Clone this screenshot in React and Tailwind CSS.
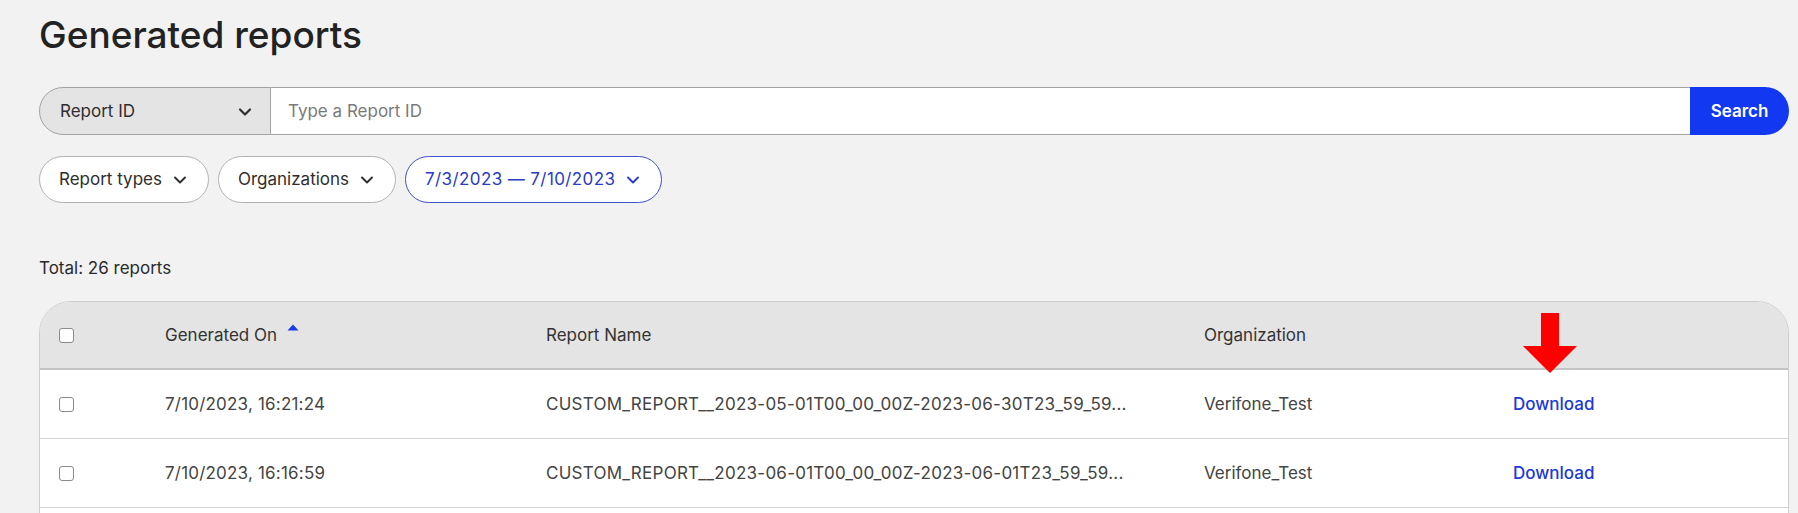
import React from 'react';
import { ChevronDown } from 'lucide-react';

const font = { fontFamily: 'Inter, "Noto Sans", Arial, sans-serif' };

const rows = [
  {
    date: '7/10/2023, 16:21:24',
    name: 'CUSTOM_REPORT__2023-05-01T00_00_00Z-2023-06-30T23_59_59...',
    org: 'Verifone_Test',
  },
  {
    date: '7/10/2023, 16:16:59',
    name: 'CUSTOM_REPORT__2023-06-01T00_00_00Z-2023-06-01T23_59_59...',
    org: 'Verifone_Test',
  },
];

const Checkbox = () => (
  <span className="block w-[15px] h-[15px] rounded-[3px] border-[1.5px] border-[#8a8a8a] bg-white" />
);

const Pill = ({ label, active }) => (
  <button
    className={`flex items-center gap-[8px] h-[47px] pl-[19px] pr-[18px] rounded-full border text-[17px] ${
      active ? 'border-[#3f50c8] text-[#2b3cc4] tracking-[0.4px]' : 'border-[#b3b3b3] text-[#2e2e2e]'
    } bg-white`}
  >
    <span>{label}</span>
    <ChevronDown size={20} strokeWidth={2.3} />
  </button>
);

export default function App() {
  return (
    <div className="h-[513px] overflow-hidden bg-[#f2f2f2] pl-[39px] pr-[9px] pt-[13px]" style={font}>
      <h1 className="text-[37px] leading-[44px] font-medium text-[#222222]">
        Generated reports
      </h1>

      {/* Search bar */}
      <div className="mt-[30px] flex h-[48px]">
        <div className="w-[232px] flex items-center justify-between pl-[20px] pr-[15px] pt-[1px] bg-[#e4e4e4] border border-[#a3a3a3] rounded-l-full text-[17px] text-[#2e2e2e]">
          <span>Report ID</span>
          <ChevronDown size={20} strokeWidth={2.6} />
        </div>
        <div className="flex-1 flex items-center pl-[17px] pt-[1px] bg-white border-y border-[#a3a3a3] text-[17px] text-[#7a7a7a]">
          Type a Report ID
        </div>
        <button className="w-[99px] pt-[1px] bg-[#1238f2] text-white text-[17px] font-semibold rounded-r-full">
          Search
        </button>
      </div>

      {/* Filters */}
      <div className="mt-[21px] flex gap-[9px]">
        <Pill label="Report types" />
        <Pill label="Organizations" />
        <Pill label="7/3/2023 — 7/10/2023" active />
      </div>

      <div className="mt-[53px] text-[17px] leading-[24px] text-[#2a2a2a]">Total: 26 reports</div>

      {/* Table */}
      <div className="relative mt-[21px] rounded-t-[32px] border border-[#cdcdcd] overflow-hidden bg-white">
        <div className="grid grid-cols-[125px_381px_658px_309px_1fr] items-center h-[68px] pt-[1px] bg-[#e4e4e4] border-b-2 border-[#c4c4c4] text-[17px] text-[#333333]">
          <div className="pl-[19px]">
            <Checkbox />
          </div>
          <div className="flex items-start gap-[10px]">
            <span>Generated On</span>
            <svg width="12" height="7" viewBox="0 0 12 7" className="mt-[1px]">
              <path d="M6 0.5 L11.5 6.5 H0.5 Z" fill="#1c3be6" />
            </svg>
          </div>
          <div>Report Name</div>
          <div>Organization</div>
          <div />
        </div>
        {rows.map((r, i) => (
          <div
            key={i}
            className="grid grid-cols-[125px_381px_658px_309px_1fr] items-center h-[69px] pt-[1px] border-b border-[#d4d4d4] text-[17px] text-[#444444]"
          >
            <div className="pl-[19px]">
              <Checkbox />
            </div>
            <div className="tracking-[0.2px]">{r.date}</div>
            <div className="whitespace-nowrap tracking-[0.25px]">{r.name}</div>
            <div>{r.org}</div>
            <div className="text-[#2038d6] font-medium">Download</div>
          </div>
        ))}
        <div className="h-[20px]" />

        {/* annotation arrow */}
        <svg className="absolute left-[1483px] top-[11px]" width="54" height="60" viewBox="0 0 54 60">
          <path d="M18 0 H36 V33 H54 L27 60 L0 33 H18 Z" fill="#ff0000" />
        </svg>
      </div>
    </div>
  );
}
